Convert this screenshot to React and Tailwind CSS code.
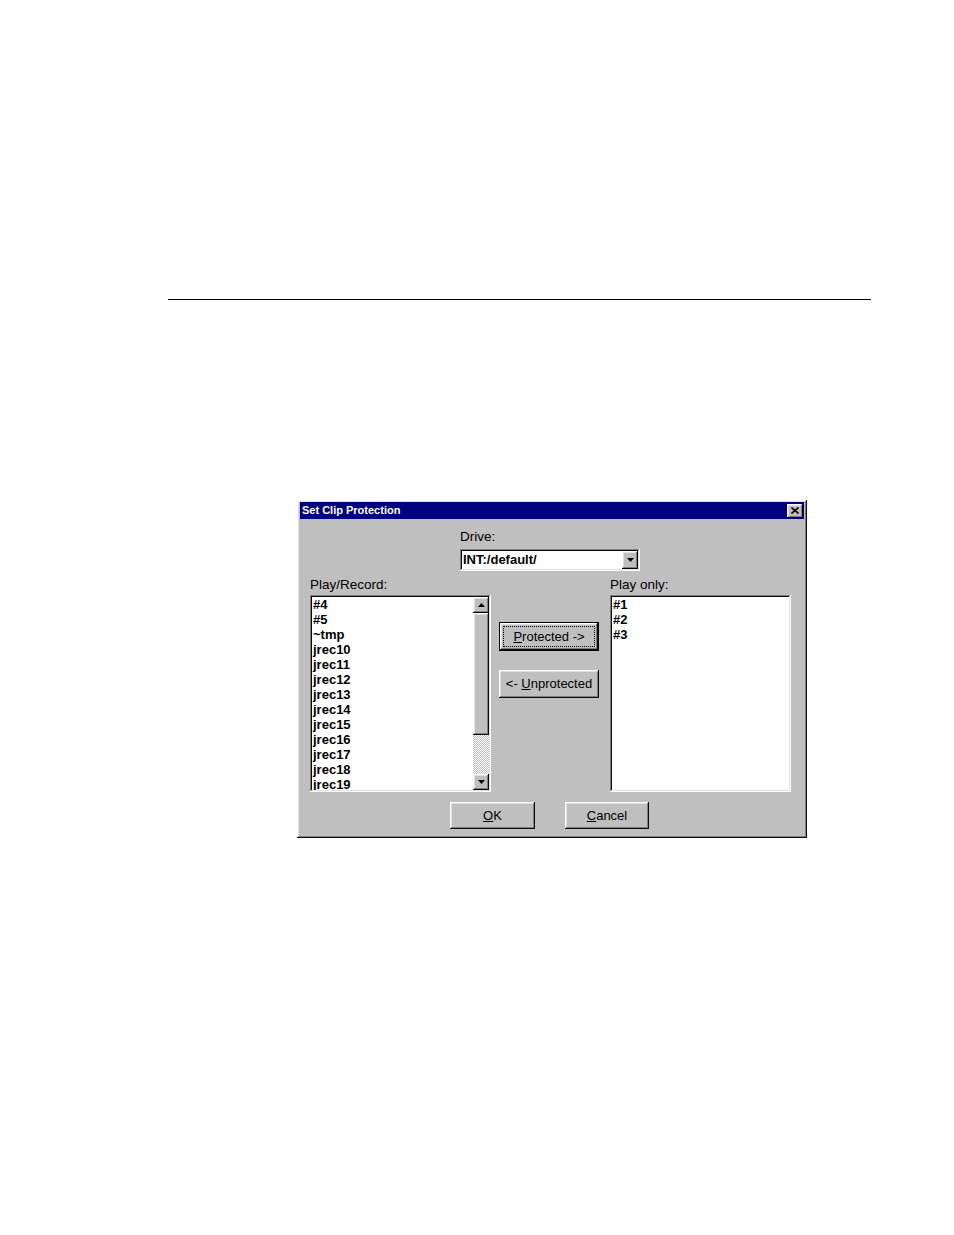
import React from "react";

const RAISED =
  "shadow-[inset_-1px_-1px_#0a0a0a,inset_1px_1px_#ffffff,inset_-2px_-2px_#808080,inset_2px_2px_#dfdfdf]";
const SUNKEN =
  "shadow-[inset_-1px_-1px_#ffffff,inset_1px_1px_#808080,inset_-2px_-2px_#dfdfdf,inset_2px_2px_#0a0a0a]";

const LEFT_ITEMS = ["#4", "#5", "~tmp", "jrec10", "jrec11", "jrec12", "jrec13", "jrec14", "jrec15", "jrec16", "jrec17", "jrec18", "jrec19"];
const RIGHT_ITEMS = ["#1", "#2", "#3"];

function Arrow({ up }) {
  return (
    <svg width="7" height="4" viewBox="0 0 7 4" className="block">
      {up ? <path d="M3.5 0 L7 4 L0 4 Z" fill="#000" /> : <path d="M0 0 L7 0 L3.5 4 Z" fill="#000" />}
    </svg>
  );
}

function ArrowButton({ up, className = "" }) {
  return (
    <div className={`w-[16px] h-[16px] bg-[#bfbfbf] flex items-center justify-center ${RAISED} ${className}`}>
      <Arrow up={up} />
    </div>
  );
}

function ListBox({ items, scroll }) {
  return (
    <div className={`h-[197px] bg-white p-[2px] flex ${SUNKEN}`}>
      <div className="flex-1 overflow-hidden pl-[1px]">
        {items.map((it) => (
          <div key={it} className="text-[13px] font-bold leading-[15px] text-black whitespace-nowrap">
            {it}
          </div>
        ))}
      </div>
      {scroll && (
        <div className="w-[16px] flex flex-col">
          <ArrowButton up />
          <div className={`h-[122px] bg-[#bfbfbf] ${RAISED}`} />
          <div className="flex-1 bg-[repeating-conic-gradient(#bfbfbf_0%_25%,#ffffff_0%_50%)] bg-size-[2px_2px]" />
          <ArrowButton />
        </div>
      )}
    </div>
  );
}

function Button({ children, w, h, isDefault }) {
  if (isDefault) {
    return (
      <div className="border border-black bg-[#bfbfbf]" style={{ width: w, height: h }}>
        <div className={`w-full h-full p-[3px] ${RAISED}`}>
          <div className="w-full h-full border border-dotted border-black flex items-center justify-center text-[13px] text-black">
            {children}
          </div>
        </div>
      </div>
    );
  }
  return (
    <div
      className={`bg-[#bfbfbf] flex items-center justify-center text-[13px] text-black ${RAISED}`}
      style={{ width: w, height: h }}
    >
      {children}
    </div>
  );
}

export default function App() {
  return (
    <div className="w-[954px] h-[1235px] bg-white pt-[299px] font-['Liberation_Sans',Arial,sans-serif]">
      <div className="ml-[168px] w-[703px] h-px bg-black" />

      {/* Dialog */}
      <div className={`ml-[297px] mt-[200px] w-[510px] h-[338px] bg-[#bfbfbf] pt-[2px] px-[3px] ${RAISED}`}>
        {/* Title bar */}
        <div className="h-[17px] bg-[#000080] flex items-center justify-between pl-[2px] pr-[1px]">
          <span className="text-[11px] font-bold text-white leading-none">Set Clip Protection</span>
          <div className={`w-[16px] h-[14px] bg-[#bfbfbf] flex items-center justify-center ${RAISED}`}>
            <svg width="8" height="7" viewBox="0 0 8 7">
              <path d="M0.5 0.5 L7.5 6.5 M7.5 0.5 L0.5 6.5" stroke="#000" strokeWidth="1.6" />
            </svg>
          </div>
        </div>

        {/* Drive */}
        <div className="pl-[160px] mt-[10px]">
          <div className="text-[13.5px] leading-[16px] text-black">Drive:</div>
          <div className={`mt-[4px] w-[180px] h-[22px] bg-white p-[2px] flex ${SUNKEN}`}>
            <div className="flex-1 pl-[1px] text-[13px] font-bold leading-[18px] text-black">INT:/default/</div>
            <div className={`w-[16px] h-[18px] bg-[#bfbfbf] flex items-center justify-center ${RAISED}`}>
              <Arrow />
            </div>
          </div>
        </div>

        {/* Lists */}
        <div className="flex pl-[10px] mt-[6px]">
          <div className="w-[181px]">
            <div className="text-[13.5px] leading-[16px] text-black">Play/Record:</div>
            <div className="mt-[2px]">
              <ListBox items={LEFT_ITEMS} scroll />
            </div>
          </div>

          <div className="w-[100px] ml-[8px] pt-[45px] flex flex-col">
            <Button w={100} h={29} isDefault>
              <span>
                <span className="underline">P</span>rotected -&gt;
              </span>
            </Button>
            <div className="mt-[19px]">
              <Button w={100} h={28}>
                <span>
                  &lt;- <span className="underline">U</span>nprotected
                </span>
              </Button>
            </div>
          </div>

          <div className="w-[181px] ml-[11px]">
            <div className="text-[13.5px] leading-[16px] text-black">Play only:</div>
            <div className="mt-[2px]">
              <ListBox items={RIGHT_ITEMS} />
            </div>
          </div>
        </div>

        {/* OK / Cancel */}
        <div className="flex pl-[150px] mt-[10px] gap-[30px]">
          <Button w={85} h={27}>
            <span>
              <span className="underline">O</span>K
            </span>
          </Button>
          <Button w={84} h={27}>
            <span>
              <span className="underline">C</span>ancel
            </span>
          </Button>
        </div>
      </div>
    </div>
  );
}
